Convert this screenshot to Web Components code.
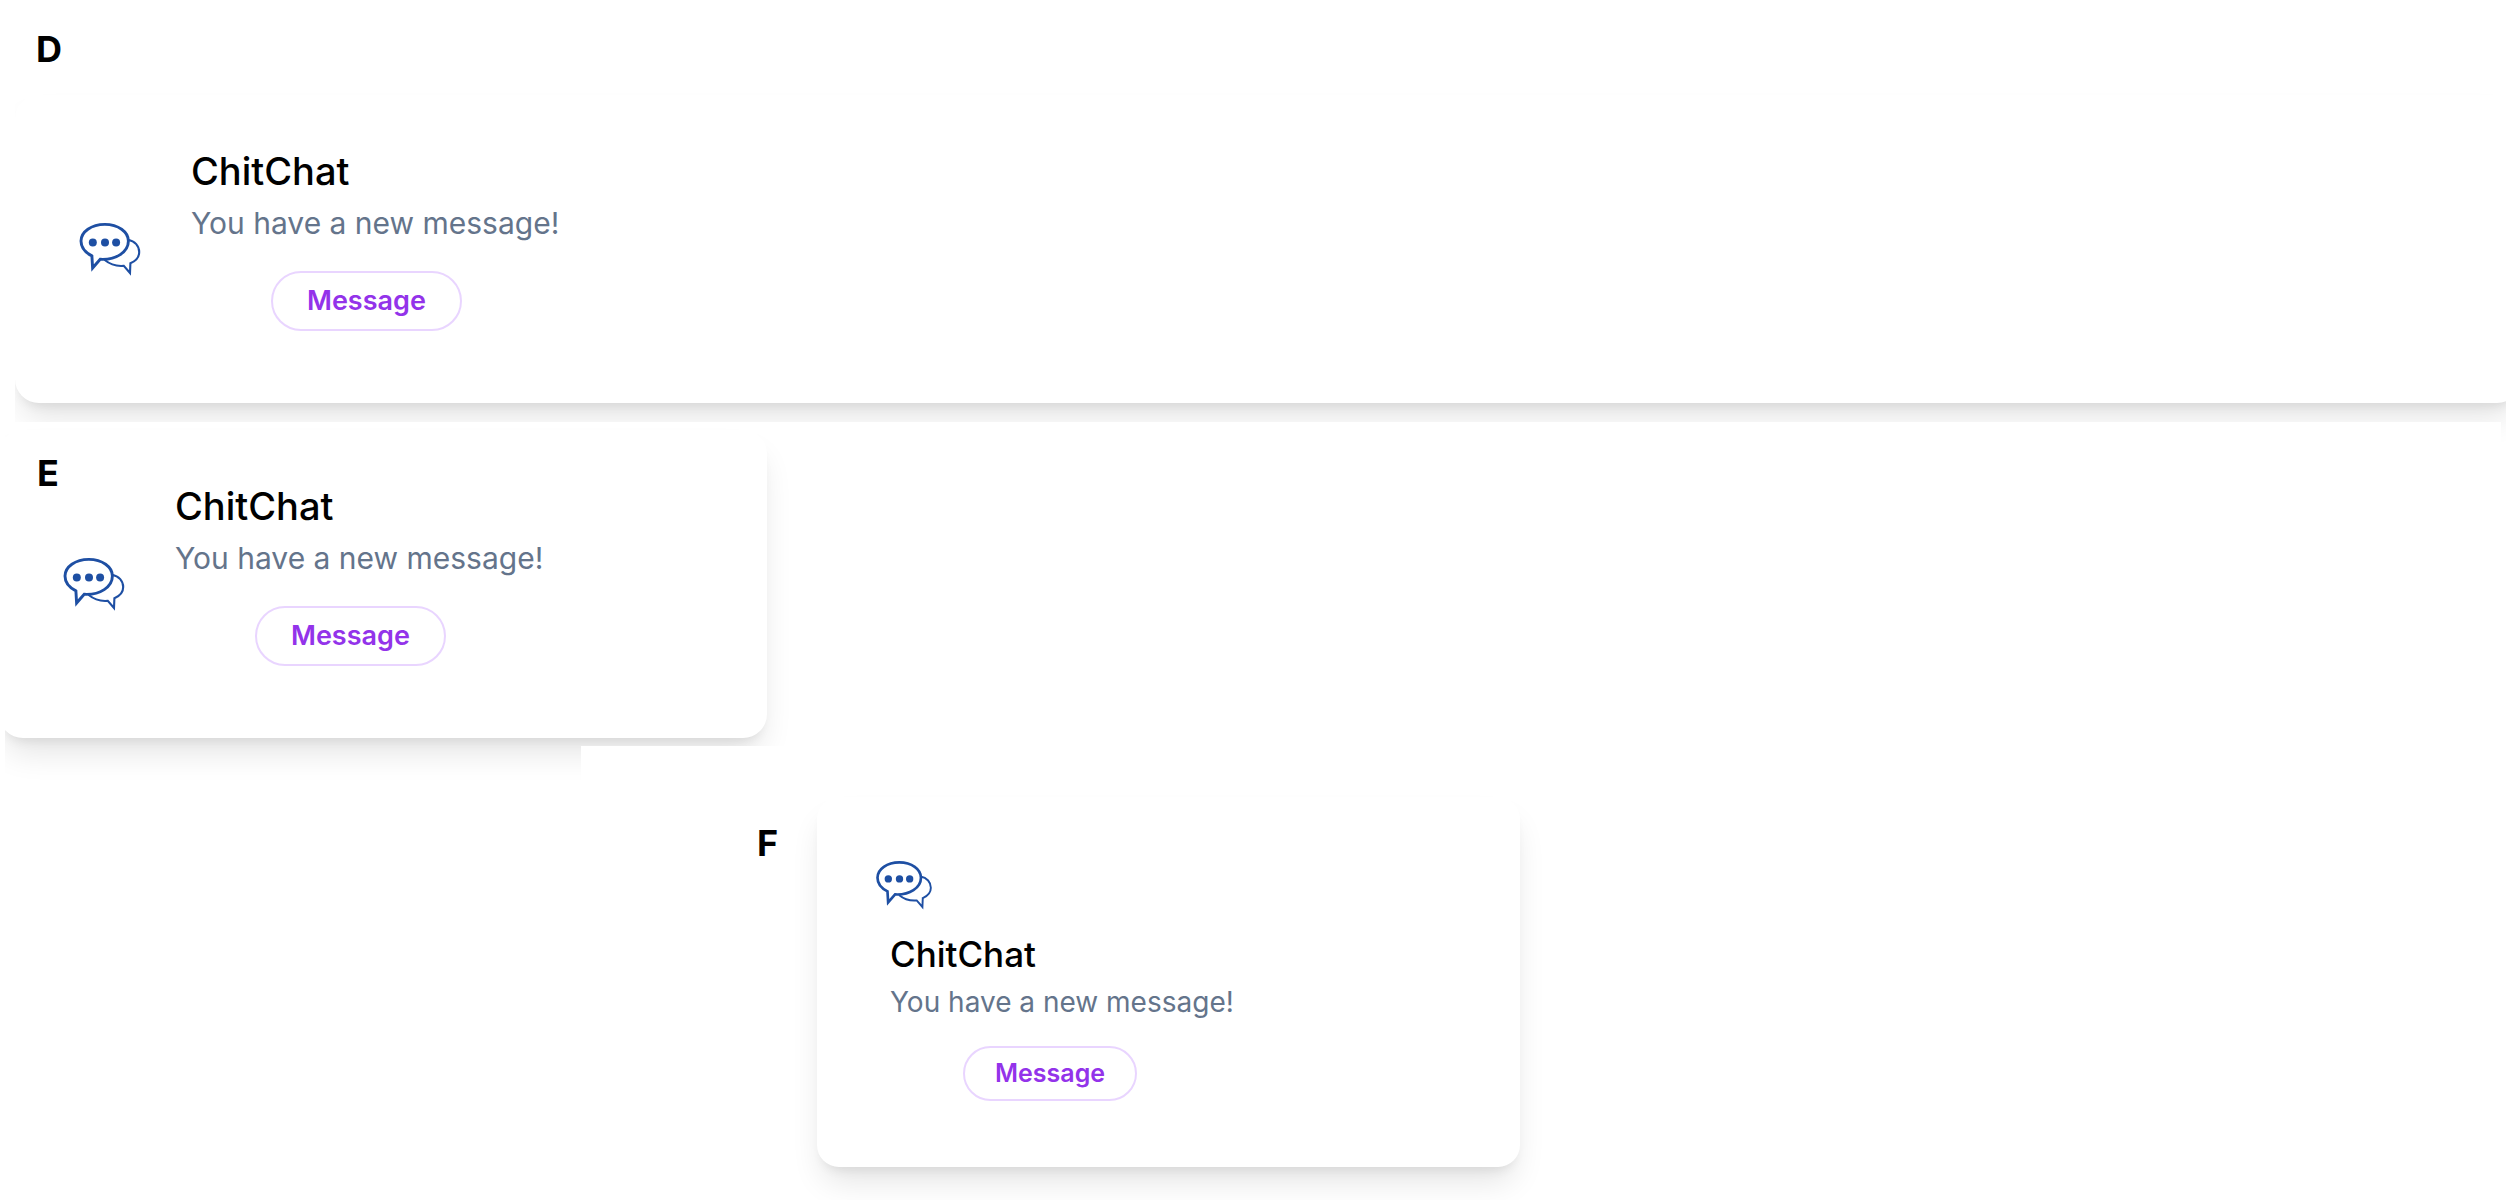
<!DOCTYPE html>
<html lang="en">
<head>
<meta charset="utf-8">
<title>ChitChat notification variants</title>
<style>
  html { background: #fff; }
  body {
    margin: 0;
    overflow-x: hidden;
    color: #000;
    font-family: Inter, "Liberation Sans", sans-serif;
  }
</style>
</head>
<body>
<variant-board></variant-board>

<template id="chat-icon">
  <style>
    :host { display: block; flex: none; width: var(--icon-size, 96px); height: var(--icon-size, 96px); }
    svg { display: block; width: 100%; height: 100%; }
  </style>
  <svg viewBox="0 0 96 96" fill="none" stroke="#1e4fa3" stroke-linejoin="miter" aria-hidden="true">
    <path stroke-width="2.1" d="M65 38.8C72 40 76.2 45 76.2 51C76.2 56 72.8 60 67.4 62.2L67 72L60.8 64.8C52.5 65.6 46.5 63 41.4 58.8"/>
    <path stroke-width="2.9" d="M28.9 54.9C22 51.5 18 46.3 18 40.1C18 30.8 28.4 23.4 41.8 23.4C55.2 23.4 65.4 30.8 65.4 40.1C65.4 51 53 59.2 37.2 58.3L29.6 67Z"/>
    <g fill="#1e4fa3" stroke="none">
      <circle cx="29.8" cy="41.4" r="4"/><circle cx="42" cy="41.4" r="4"/><circle cx="53.1" cy="41.4" r="4"/>
    </g>
  </svg>
</template>

<template id="pill-button">
  <style>
    :host { display: block; }
    button {
      box-sizing: border-box;
      display: block;
      margin: 0;
      padding: var(--button-pad, 8px 34px);
      border: 2px solid #e9d5ff;
      border-radius: 999px;
      background: transparent;
      color: #9333ea;
      font: 600 var(--button-size, 27px)/var(--button-line, 40px) Inter, "Liberation Sans", sans-serif;
      cursor: pointer;
    }
    button:hover { background: #9333ea; color: #fff; }
  </style>
  <button type="button"><slot></slot></button>
</template>

<template id="notice-card">
  <style>
    :host {
      display: flex;
      align-items: center;
      gap: 32px;
      box-sizing: border-box;
      padding: 48px;
      border-radius: 24px;
      background: #fff;
      box-shadow: 0 20px 32px -6px rgb(0 0 0 / .11), 0 8px 12px -6px rgb(0 0 0 / .09);
    }
    h2 { margin: 0; font-size: 38px; line-height: 56px; font-weight: 500; }
    p { margin: 0; font-size: 30px; line-height: 48px; color: #64748b; }
    pill-button { margin: 24px 0 24px 80px; }
    :host([stacked]) {
      display: block;
      padding: 44px;
      border-radius: 22px;
      --icon-size: 88px;
      --button-size: 25px;
      --button-line: 37px;
      --button-pad: 7px 30px;
    }
    :host([stacked]) .body { margin-left: 29px; }
    :host([stacked]) h2 { font-size: 35px; line-height: 51px; }
    :host([stacked]) p { font-size: 28px; line-height: 44px; }
    :host([stacked]) pill-button { margin: 22px 0 22px 73px; }
  </style>
  <chat-icon></chat-icon>
  <div class="body">
    <h2><slot name="title"></slot></h2>
    <p><slot></slot></p>
    <pill-button><slot name="action"></slot></pill-button>
  </div>
</template>

<template id="variant-panel">
  <style>
    :host { display: block; position: relative; background: #fff; }
    .label { font-size: 36px; line-height: 44px; font-weight: 700; }
    :host([kind="wide"]) { padding: 27px 0 19px; clip-path: inset(0 0 -40px 15px); }
    :host([kind="wide"]) .label { padding: 0 0 24px 36px; }
    :host([kind="wide"]) .card { margin: 0 -15px 0 15px; }
    :host([kind="fixed"]) { margin: 0 5px; padding: 8px 0; clip-path: inset(0 0 -60px 0); }
    :host([kind="fixed"]) .label { position: absolute; left: 32px; top: 29px; }
    :host([kind="fixed"]) .card { width: 768px; margin-left: -6px; }
    :host([kind="stacked"]) { display: flex; gap: 36px; margin-left: 581px; padding: 51px 0 33px 176px; }
    :host([kind="stacked"]) .label { width: 24px; padding-top: 24px; }
    :host([kind="stacked"]) .card { width: 703px; }
  </style>
  <div class="label"><slot name="label"></slot></div>
  <div class="card"><slot></slot></div>
</template>

<template id="variant-board">
  <style>:host { display: block; }</style>
  <variant-panel kind="wide">
    <span slot="label">D</span>
    <notice-card><span slot="title">ChitChat</span>You have a new message!<span slot="action">Message</span></notice-card>
  </variant-panel>
  <variant-panel kind="fixed">
    <span slot="label">E</span>
    <notice-card><span slot="title">ChitChat</span>You have a new message!<span slot="action">Message</span></notice-card>
  </variant-panel>
  <variant-panel kind="stacked">
    <span slot="label">F</span>
    <notice-card stacked><span slot="title">ChitChat</span>You have a new message!<span slot="action">Message</span></notice-card>
  </variant-panel>
</template>

<script>
  class TemplateElement extends HTMLElement {
    constructor() {
      super();
      const template = document.getElementById(this.localName);
      this.attachShadow({ mode: "open" }).append(template.content.cloneNode(true));
    }
  }
  customElements.define("chat-icon", class ChatIcon extends TemplateElement {});
  customElements.define("pill-button", class PillButton extends TemplateElement {});
  customElements.define("notice-card", class NoticeCard extends TemplateElement {});
  customElements.define("variant-panel", class VariantPanel extends TemplateElement {});
  customElements.define("variant-board", class VariantBoard extends TemplateElement {});
</script>
</body>
</html>
